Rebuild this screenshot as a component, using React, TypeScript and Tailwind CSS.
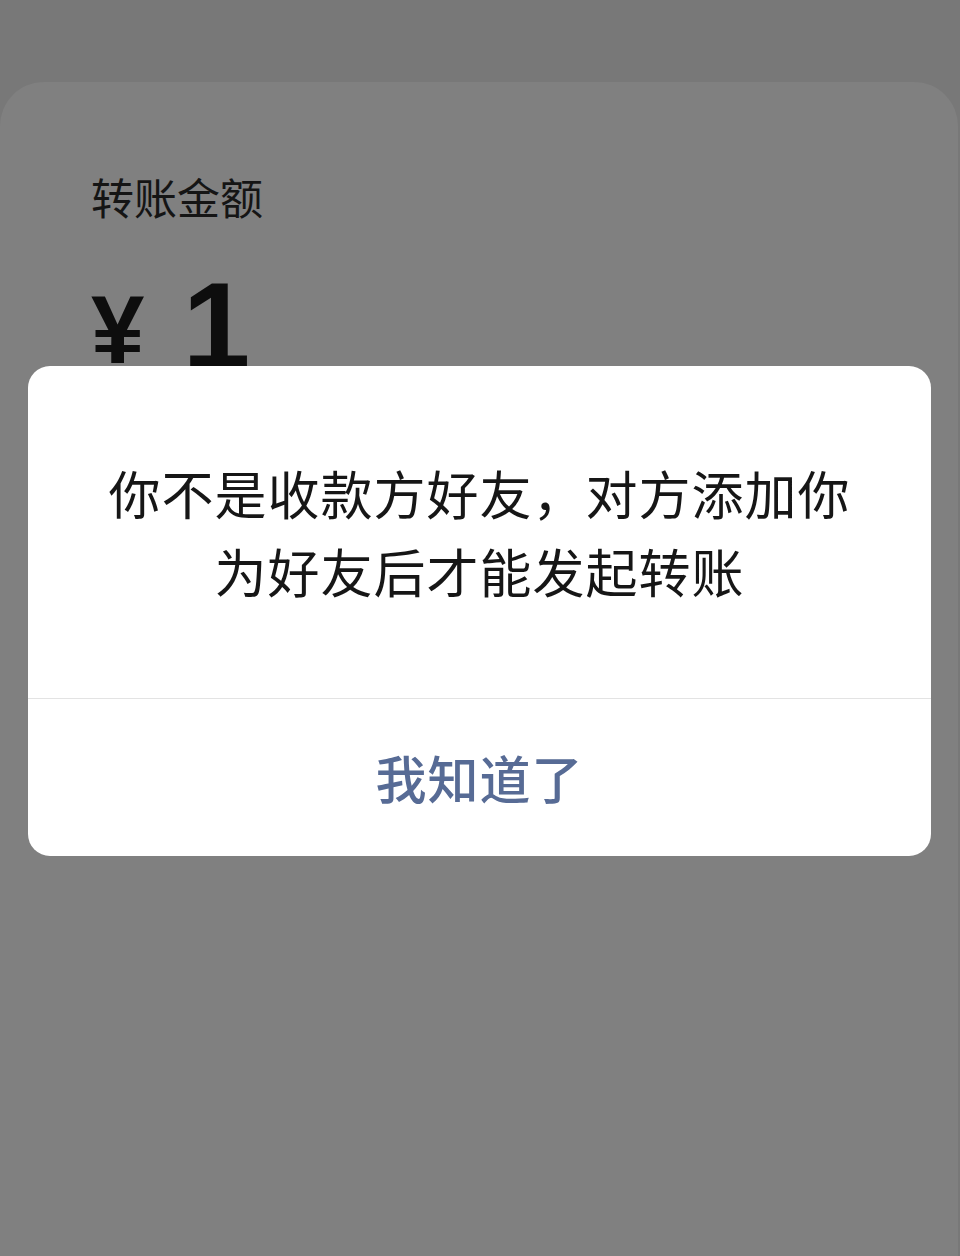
const font = { fontFamily: '"Noto Sans CJK SC", "Noto Sans", sans-serif' };
const digits = { fontFamily: '"Liberation Sans", Arial, sans-serif' };

export default function App() {
  return (
    <div className="relative w-[960px] h-[1256px] bg-[#787878] overflow-hidden" style={font}>
      {/* transfer page, dimmed */}
      <div className="flex flex-col h-full pt-[82px]">
        <div className="flex-1 bg-[#808080] rounded-t-[44px] mr-[2px] pl-[91px] pt-[86px]">
          <div className="text-[43px] leading-[56px] text-[#151515]">转账金额</div>
          <div className="flex items-start mt-[46px] text-[#0d0d0d] font-bold">
            <span className="text-[96px] leading-[120px] tracking-[-2px]" style={digits}>
              ¥
            </span>
            <span className="ml-[40px] text-[122px] leading-[112px]" style={digits}>
              1
            </span>
          </div>
        </div>
      </div>

      {/* alert dialog */}
      <div className="absolute left-[28px] top-[366px] w-[903px] bg-white rounded-[22px] flex flex-col">
        <div className="h-[332px] flex items-center justify-center px-[70px]">
          <p className="text-center text-[52px] leading-[78px] tracking-[1px] text-[#161616]">
            你不是收款方好友，对方添加你为好友后才能发起转账
          </p>
        </div>
        <div className="h-px bg-[#e3e3e3]" />
        <button className="h-[157px] flex items-center justify-center text-[51px] font-medium text-[#576b95] tracking-[1px]">
          我知道了
        </button>
      </div>
    </div>
  );
}
